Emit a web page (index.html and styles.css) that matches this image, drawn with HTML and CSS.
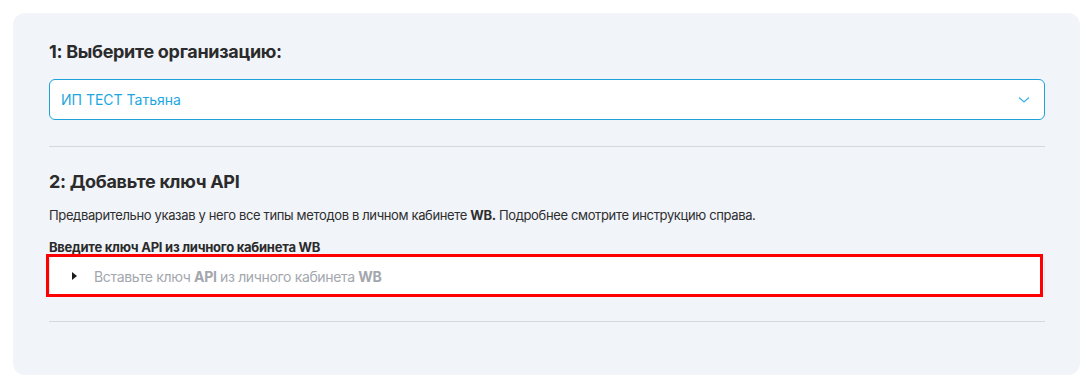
FILE: index.html
```html
<!DOCTYPE html>
<html>
<head>
	<meta charset="utf-8">
	<title>Подключение WB</title>
	<link rel="stylesheet" href="styles.css">
</head>
<body>
	<div class="card">

		<h2 class="step-title">1: Выберите организацию:</h2>
		<div class="select">
			<span class="select-value">ИП ТЕСТ Татьяна</span>
			<svg class="select-arrow" width="12" height="8" viewBox="0 0 12 8">
				<path d="M1 1.5 L6 6 L11 1.5" fill="none" stroke="#3cb3e6" stroke-width="1.3"/>
			</svg>
		</div>

		<hr class="divider">

		<h2 class="step-title">2: Добавьте ключ API</h2>
		<p class="hint">Предварительно указав у него все типы методов в личном кабинете <b>WB.</b> Подробнее смотрите инструкцию справа.</p>

		<label class="field-label" for="apikey">Введите ключ API из личного кабинета WB</label>
		<div class="key-field" id="apikey">
			<span class="marker"></span>
			<span class="placeholder">Вставьте ключ <b>API</b> из личного кабинета <b>WB</b></span>
			<span class="highlight"></span>
		</div>

		<hr class="divider last">

	</div>
</body>
</html>
```

FILE: styles.css
```css
body{
	margin: 0;
	padding: 13px 12px 9px 13px;
	background-color: #fff;
	font-family: Inter, "Noto Sans", sans-serif;
	color: #2b2b2b;
}
.card{
	display: flex;
	flex-direction: column;
	background-color: #f1f4f9;
	border-radius: 12px;
	padding: 28px 35px 53px 36px;
}
.step-title{
	margin: 0;
	font-size: 18px;
	font-weight: 700;
	line-height: 22px;
	letter-spacing: -0.3px;
}
.select{
	display: flex;
	align-items: center;
	justify-content: space-between;
	height: 39px;
	margin-top: 16px;
	padding: 0 14px 0 11px;
	background-color: #fff;
	border: 1px solid #1ea2d9;
	border-radius: 6px;
}
.select-value{
	font-size: 14px;
	color: #1ea7df;
}
.divider{
	width: 100%;
	margin: 26px 0 24px;
	border: none;
	border-top: 1px solid #d5d9df;
}
.hint{
	margin: 14px 0 0;
	font-size: 13px;
	line-height: 16px;
	letter-spacing: -0.36px;
	color: #2e2e2e;
}
.field-label{
	margin-top: 16px;
	font-size: 13px;
	font-weight: 700;
	line-height: 16px;
	letter-spacing: -0.25px;
}
.key-field{
	position: relative;
	display: flex;
	align-items: center;
	height: 38px;
	margin-top: 1px;
	padding-left: 22px;
	background-color: #fff;
	border: 1px solid #e2e5ea;
	border-radius: 4px;
}
.marker{
	width: 0;
	height: 0;
	border-top: 4px solid transparent;
	border-bottom: 4px solid transparent;
	border-left: 5px solid #1c1c1c;
	margin-right: 17px;
}
.placeholder{
	font-size: 14px;
	letter-spacing: -0.35px;
	color: #a3a7ad;
}
.placeholder b{
	font-weight: 700;
}
.highlight{
	position: absolute;
	left: -4px;
	top: -3px;
	right: 1px;
	bottom: -2px;
	border: 3px solid #ff0000;
}
.divider.last{
	margin: 25px 0 0;
}
```
